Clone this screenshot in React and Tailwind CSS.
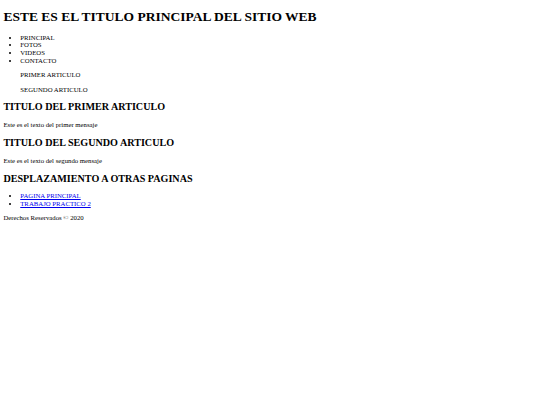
export default function App() {
  return (
    <div className="min-h-[405px] bg-white text-black font-['Liberation_Serif','Times_New_Roman',serif] text-[6.75px] leading-[7.72px] px-[3.375px] pt-px">
      <h1 className="text-[13.5px] leading-[15.5px] font-bold mt-[8.05px] mb-[9px]">ESTE ES EL TITULO PRINCIPAL DEL SITIO WEB</h1>
      <ul className="list-disc pl-[16.875px] my-[6.75px]">
        <li>PRINCIPAL</li>
        <li>FOTOS</li>
        <li>VIDEOS</li>
        <li>CONTACTO</li>
      </ul>
      <div className="pl-[16.875px]">
        <p className="my-[6.7px]">PRIMER ARTICULO</p>
        <p className="my-[6.7px]">SEGUNDO ARTICULO</p>
      </div>
      <h2 className="text-[10.125px] leading-[11.45px] font-bold my-[8.2px]">TITULO DEL PRIMER ARTICULO</h2>
      <p className="my-[6.7px]">Este es el texto del primer mensaje</p>
      <h2 className="text-[10.125px] leading-[11.45px] font-bold my-[8.2px]">TITULO DEL SEGUNDO ARTICULO</h2>
      <p className="my-[6.7px]">Este es el texto del segundo mensaje</p>
      <h2 className="text-[10.125px] leading-[11.45px] font-bold my-[8.2px]">DESPLAZAMIENTO A OTRAS PAGINAS</h2>
      <ul className="list-disc pl-[16.875px] my-[6.7px]">
        <li><a href="#" className="text-[#0000EE] underline">PAGINA PRINCIPAL</a></li>
        <li><a href="#" className="text-[#0000EE] underline">TRABAJO PRACTICO 2</a></li>
      </ul>
      <p className="my-[6.7px]">Derechos Reservados © 2020</p>
    </div>
  );
}
